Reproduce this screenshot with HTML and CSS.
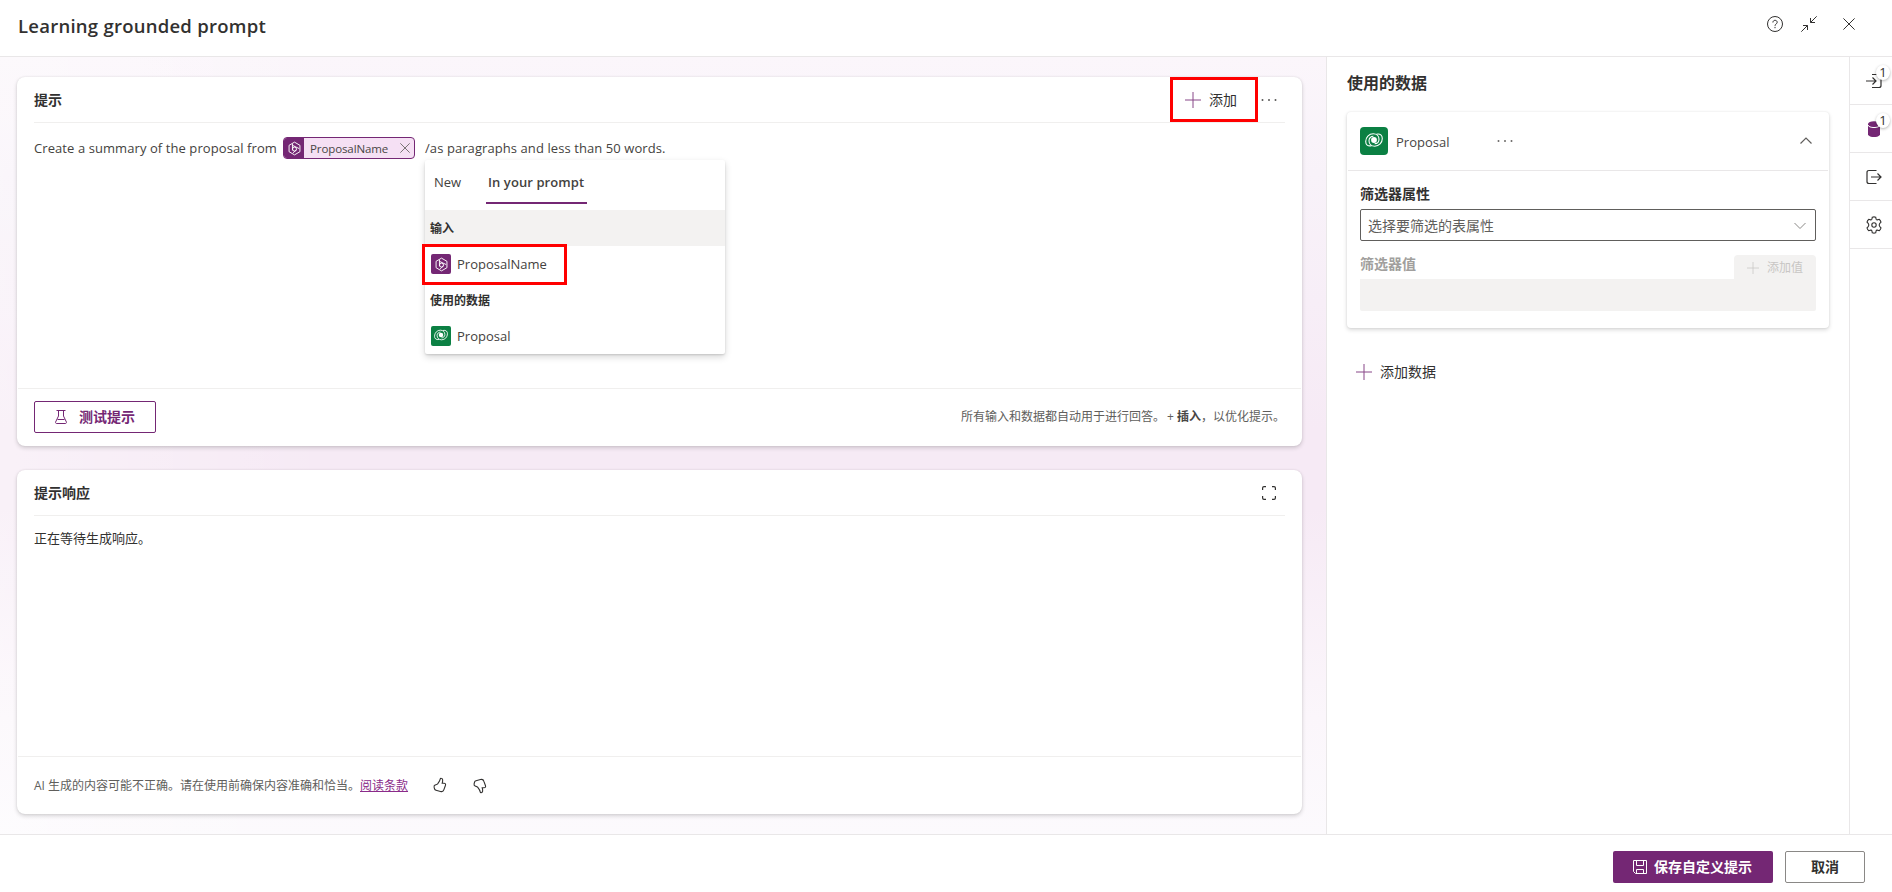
FILE: index.html
```html
<!DOCTYPE html>
<html lang="zh-CN">
<head>
<meta charset="utf-8">
<title>Learning grounded prompt</title>
<link rel="stylesheet" href="styles.css">
</head>
<body>
<svg class="defs" width="0" height="0">
  <symbol id="hex" viewBox="0 0 16 16"><path d="M8 1.200 13.800 4.600V11.400L8 14.800 2.200 11.400V4.600ZM5.800 3V10M5.800 4.600 13 8.100M10.300 9.300 6.500 12.600" fill="none" stroke="currentColor" stroke-width="1"/><circle cx="8" cy="8.600" r="2.100" fill="none" stroke="currentColor"/></symbol>
  <symbol id="dv" viewBox="0 0 18 14"><g fill="none" stroke="currentColor" stroke-width="1.100"><path d="M6.600 12.700C2.600 13.600.7 11.600.7 8.500.7 4.300 4 .8 8.200.8 11.800.8 14 3.300 14 6.300 14 9 12 10.700 9.600 10.700"/><path d="M11.400 1.200C15.400.300 17.300 2.400 17.300 5.500 17.300 9.700 14 13.200 9.800 13.200 6.200 13.200 4 10.700 4 7.700 4 5 6 3.300 8.400 3.300"/></g><circle cx="9" cy="7" r="2.900" fill="currentColor"/></symbol>
  <symbol id="plus" viewBox="0 0 16 16"><path d="M8 0V16M0 8H16" fill="none" stroke="currentColor"/></symbol>
  <symbol id="x" viewBox="0 0 12 12"><path d="M.4.4 11.600 11.600M11.600.4.4 11.600" fill="none" stroke="currentColor"/></symbol>
  <symbol id="dots" viewBox="0 0 16 4"><path d="M.7 1.200H2.300V2.800H.7ZM7.200 1.200H8.800V2.800H7.200ZM13.700 1.200H15.300V2.800H13.700Z" fill="currentColor"/></symbol>
  <symbol id="thumb" viewBox="0 0 14 16"><path d="M8.200 1.300C7.600 1.200 7.300 1.600 7.200 2.200 6.900 4 5.500 5.600 4.600 6.800 4 7.500 3 7.700 2.100 8.100 1.200 8.500.9 9.300 1.100 10.200L1.600 12C1.800 12.700 2.300 13.100 3 13.300L7.500 14.500C9 14.900 10.500 14.100 10.900 12.600L12.500 8.200C12.900 7 12.200 6.200 11 6.200H9.200C9.500 5 9.900 3.700 9.600 2.600 9.400 1.800 8.900 1.400 8.200 1.300Z" fill="none" stroke="currentColor" stroke-width="1.100"/></symbol>
</svg>

<header class="topbar">
  <h1 class="title">Learning grounded prompt</h1>
  <div class="window-actions">
    <svg class="help" viewBox="0 0 16 16" width="16" height="16" fill="none" stroke="#323130"><circle cx="8" cy="8" r="7.500"/><path d="M5.900 6.500C5.900 5.200 6.800 4.300 8 4.300S10.200 5.100 10.200 6.300C10.200 8 8 7.900 8 9.800M8 10.900V12.200"/></svg>
    <svg class="shrink" viewBox="0 0 16 16" width="16" height="16" fill="none" stroke="#323130"><path d="M.3 15.700 6.500 9.500M2 9.500H6.500V14M15.700.3 9.500 6.500M9.500 2V6.500H14"/></svg>
    <svg class="close" width="12" height="12"><use href="#x"/></svg>
  </div>
</header>

<main class="workspace">
  <section class="canvas">
    <article class="card prompt-card">
      <div class="card-head">
        <h2 class="heading">提示</h2>
        <div class="head-tools">
          <button class="add-button marked"><svg class="accent" width="16" height="16"><use href="#plus"/></svg><span>添加</span></button>
          <svg class="more" width="16" height="4"><use href="#dots"/></svg>
        </div>
      </div>
      <div class="prompt-text">
        <span class="copy copy-start">Create a summary of the proposal from</span>
        <span class="chip">
          <span class="chip-icon"><svg width="15" height="15"><use href="#hex"/></svg></span>
          <span class="chip-name">ProposalName</span>
          <svg class="chip-x" width="10" height="10"><use href="#x"/></svg>
        </span>
        <span class="anchor"><span class="copy copy-end">/as paragraphs and less than 50 words.</span>
          <div class="picker">
            <div class="tabs"><span class="tab tab-new">New</span><span class="tab tab-active"><span class="tab-label">In your prompt</span></span></div>
            <div class="group group-shaded">输入</div>
            <div class="option"><span class="tile violet"><svg width="15" height="15"><use href="#hex"/></svg></span><span class="option-name">ProposalName</span><span class="mark"></span></div>
            <div class="group">使用的数据</div>
            <div class="option"><span class="tile green"><svg width="14" height="12"><use href="#dv"/></svg></span><span class="option-name">Proposal</span></div>
          </div>
        </span>
      </div>
      <div class="card-foot prompt-foot">
        <button class="test-button"><svg viewBox="0 0 12 14" width="12" height="14" fill="none" stroke="currentColor"><path d="M1.500.5H10.500M3.500.5V6L.6 12C.4 12.800.7 13.500 1.500 13.500H10.500C11.300 13.500 11.600 12.800 11.400 12L8.500 6V.5M2.500 9.500H9.500"/></svg><span>测试提示</span></button>
        <p class="hint">所有输入和数据都自动用于进行回答。<span class="hint-plus">+</span><b>插入</b>，以优化提示。</p>
      </div>
    </article>

    <article class="card response-card">
      <div class="card-head">
        <h2 class="heading">提示响应</h2>
        <svg class="expand" viewBox="0 0 14 14" width="14" height="14" fill="none" stroke="#323130" stroke-width="1.200"><path d="M.6 4V2Q.6.6 2 .6H4M10 .6H12Q13.400.6 13.400 2V4M13.400 10V12Q13.400 13.400 12 13.400H10M4 13.400H2Q.6 13.400.6 12V10"/></svg>
      </div>
      <p class="waiting">正在等待生成响应。</p>
      <div class="card-foot disclaimer">
        <span class="ai">AI</span><span>生成的内容可能不正确。请在使用前确保内容准确和恰当。</span><a class="terms">阅读条款</a>
        <svg class="like" width="14" height="16"><use href="#thumb"/></svg>
        <svg class="dislike" width="14" height="16"><use href="#thumb"/></svg>
      </div>
    </article>
  </section>

  <aside class="data-pane">
    <h2 class="pane-title">使用的数据</h2>
    <div class="source">
      <div class="source-head">
        <span class="tile green big"><svg width="18" height="14"><use href="#dv"/></svg></span>
        <span class="source-name">Proposal</span>
        <svg class="source-more" width="16" height="4"><use href="#dots"/></svg>
        <svg class="chevron-up" viewBox="0 0 12 8" width="12" height="8"><path d="M.5 6.500 6 1 11.500 6.500" fill="none" stroke="#605e5c" stroke-width="1.200"/></svg>
      </div>
      <div class="source-body">
        <label class="label">筛选器属性</label>
        <div class="select"><span>选择要筛选的表属性</span><svg viewBox="0 0 12 8" width="12" height="8"><path d="M.5 1 6 6.500 11.500 1" fill="none" stroke="#8a8886"/></svg></div>
        <div class="value-row"><label class="label muted">筛选器值</label><span class="add-value"><svg width="12" height="12"><use href="#plus"/></svg><span>添加值</span></span></div>
        <div class="value-box"></div>
      </div>
    </div>
    <button class="add-data"><svg class="accent" width="16" height="16"><use href="#plus"/></svg><span>添加数据</span></button>
  </aside>

  <nav class="rail">
    <div class="rail-item"><svg viewBox="0 0 16 16" width="16" height="16" fill="none" stroke="#323130" stroke-width="1.200"><path d="M6 1.500H13Q15 1.500 15 3.500V12.500Q15 14.500 13 14.500H6M0 8H10M6.500 4.500 10 8 6.500 11.500"/></svg><span class="count">1</span></div>
    <div class="rail-item"><svg viewBox="0 0 16 16" width="16" height="16"><path d="M2 3V13.300C2 17 14 17 14 13.300V3Z" fill="#742774"/><ellipse cx="8" cy="3" rx="6" ry="2.800" fill="#742774"/><path d="M2 4C2.500 7.400 13.500 7.400 14 4" fill="none" stroke="#fff"/></svg><span class="count">1</span></div>
    <div class="rail-item"><svg viewBox="0 0 16 16" width="16" height="16" fill="none" stroke="#323130" stroke-width="1.200"><path d="M10.500 1.500H3Q1 1.500 1 3.500V12.500Q1 14.500 3 14.500H10.500M5 8H15M11.500 4.500 15 8 11.500 11.500"/></svg></div>
    <div class="rail-item"><svg viewBox="0 0 18 18" width="18" height="18" fill="none" stroke="#323130" stroke-width="1.100"><path d="M7.300 1.200Q9 .6 10.700 1.200L11.100 3.200Q11.300 4 12.200 3.900L14.300 3.300Q15.500 4.400 16 6.100L14.600 7.700Q13.700 9 14.600 10.300L16 11.900Q15.500 13.600 14.300 14.700L12.200 14.100Q11.300 14 11.100 14.800L10.700 16.800Q9 17.400 7.300 16.800L6.900 14.800Q6.700 14 5.800 14.100L3.700 14.700Q2.500 13.600 2 11.900L3.400 10.300Q4.300 9 3.400 7.700L2 6.100Q2.500 4.400 3.700 3.300L5.800 3.900Q6.700 4 6.900 3.200Z"/><circle cx="9" cy="9" r="2.200"/></svg></div>
  </nav>
</main>

<footer class="actions">
  <button class="save"><svg viewBox="0 0 14 14" width="14" height="14" fill="none" stroke="#fff"><path d="M.5.5H13.500V13.500H2.500L.5 11.500ZM3.500.5V5.500H10.500V.5M3.500 13.500V9.500H10.500V13.500"/></svg><span>保存自定义提示</span></button>
  <button class="cancel">取消</button>
</footer>
</body>
</html>
```
FILE: styles.css
```css
* { box-sizing: border-box; }
body {
  margin: 0;
  height: 892px;
  display: flex;
  flex-direction: column;
  overflow: hidden;
  background: #fff;
  color: #323130;
  font: 14px/20px "Open Sans", "Noto Sans CJK SC", sans-serif;
}
h1, h2, p { margin: 0; }
button { font: inherit; color: inherit; background: none; border: 0; padding: 0; display: flex; align-items: center; }
svg { display: block; flex: none; }
.defs { position: absolute; }
.accent { color: #742774; opacity: .85; }

.topbar { height: 57px; flex: none; border-bottom: 1px solid #e9e7e8; display: flex; justify-content: space-between; padding: 12px 37px 0 18px; }
.title { font-size: 18.500px; line-height: 28px; font-weight: 600; letter-spacing: .25px; }
.window-actions { display: flex; align-items: center; height: 24px; }
.shrink { margin: 0 26px 0 18px; }

.workspace { height: 777px; flex: none; display: flex; }
.canvas {
  width: 1327px;
  padding: 20px 24px 19px 17px;
  border-right: 1px solid #e9e7e8;
  background: linear-gradient(90deg, rgba(255,255,255,.35), rgba(255,255,255,0) 25%), linear-gradient(180deg, #fbf6fb 0, #f8f2f9 15%, #f6eaf5 48%, #f6eaf5 58%, #fbf6fb 85%, #fcfafd 100%);
  display: flex;
  flex-direction: column;
  gap: 24px;
}
.card { background: #fff; border-radius: 8px; box-shadow: 0 2px 4px rgba(0,0,0,.16), 0 0 2px rgba(0,0,0,.1); display: flex; flex-direction: column; }
.prompt-card { height: 369px; }
.response-card { height: 344px; }
.card-head { height: 46px; flex: none; margin: 0 17px; border-bottom: 1px solid #f0efee; display: flex; align-items: center; justify-content: space-between; }
.heading { font-size: 14px; line-height: 20px; font-weight: 600; }
.head-tools { display: flex; align-items: center; gap: 3px; margin-right: 8px; }
.add-button { width: 88px; height: 45px; gap: 8px; padding-left: 12px; position: relative; z-index: 1; }
.marked { border: 3px solid #f00; }
.expand { margin-right: 9px; }

.prompt-text { flex: 1; padding: 14px 17px; display: flex; align-items: flex-start; line-height: 22px; }
.copy { white-space: nowrap; color: #444240; font-size: 13px; }
.copy-start { width: 249px; letter-spacing: .08px; }
.copy-end { letter-spacing: .08px; }
.chip { width: 132px; height: 22px; margin-right: 10px; border: 1px solid #742774; border-radius: 4px; background: #f5e0f4; display: flex; align-items: center; overflow: hidden; }
.chip-icon { flex: none; width: 20px; height: 20px; background: #742774; color: #fff; display: flex; align-items: center; justify-content: center; }
.chip-name { flex: none; width: 96px; padding-left: 6px; font-size: 11.500px; letter-spacing: -.1px; line-height: 21px; color: #484644; }
.chip-x { color: #605e5c; }
.anchor { position: relative; }

.picker { position: absolute; left: 0; top: 23px; z-index: 2; width: 300px; height: 194px; background: #fff; border-radius: 2px; box-shadow: 0 3px 7px rgba(0,0,0,.16), 0 1px 2px rgba(0,0,0,.12); font-size: 13px; color: #444240; }
.tabs { height: 50px; padding-left: 9px; display: flex; }
.tab { height: 44px; line-height: 45px; }
.tab-new { width: 52px; }
.tab-active { width: 101px; padding-left: 2px; font-weight: 600; border-bottom: 2px solid #742774; white-space: nowrap; letter-spacing: .08px; }
.group { height: 36px; padding-left: 5px; font-size: 12px; line-height: 37px; font-weight: 600; color: #323130; }
.group-shaded { background: #f3f2f1; }
.option { height: 36px; padding-left: 6px; display: flex; align-items: center; gap: 6px; position: relative; }
.mark { position: absolute; left: -3px; top: -2px; width: 145px; height: 41px; border: 3px solid #f00; }
.tile { width: 20px; height: 20px; border-radius: 2px; color: #fff; display: flex; align-items: center; justify-content: center; }
.violet { background: #742774; }
.green { background: #0b8043; padding-bottom: 2px; }
.big { width: 28px; height: 28px; border-radius: 4px; padding-bottom: 3px; }

.card-foot { height: 58px; margin: 0 1px; padding: 0 16px; border-top: 1px solid #f0efee; display: flex; align-items: center; justify-content: space-between; }
.prompt-foot { padding-bottom: 1px; }
.test-button { width: 122px; height: 32px; border: 1px solid #742774; border-radius: 2px; color: #742774; font-weight: 600; gap: 12px; padding-left: 20px; }
.hint { font-size: 12px; color: #605e5c; white-space: nowrap; }
.hint b { font-weight: 600; color: #484644; }
.hint-plus { display: inline-block; width: 12px; padding-left: 2px; }
.waiting { flex: 1; padding: 12px 17px; font-size: 13px; }
.disclaimer { justify-content: flex-start; font-size: 12px; color: #605e5c; }
.ai { width: 14px; }
.terms { color: #8a2b8a; text-decoration: underline; }
.like { margin-left: 25px; margin-top: -1px; color: #323130; }
.dislike { margin-left: 26px; transform: scaleY(-1); color: #323130; }

.data-pane { width: 522px; padding: 15px 20px; }
.pane-title { font-size: 16px; line-height: 22px; font-weight: 600; }
.source { height: 216px; margin-top: 18px; border-radius: 4px; box-shadow: 0 2px 4px rgba(0,0,0,.15), 0 0 2px rgba(0,0,0,.1); }
.source-head { height: 59px; margin: 0 1px; padding: 0 16px 0 12px; border-bottom: 1px solid #e9e7e8; display: flex; align-items: center; }
.source-name { flex: none; width: 109px; padding: 1px 0 0 8px; font-size: 13px; color: #484644; }
.source-more { color: #484644; }
.chevron-up { margin-left: auto; }
.source-body { padding: 13px 13px 0; display: flex; flex-direction: column; }
.label { font-weight: 600; }
.muted { color: #a19f9d; }
.select { height: 32px; margin-top: 5px; border: 1px solid #605e5c; border-radius: 2px; padding: 1px 9px 0 7px; display: flex; align-items: center; justify-content: space-between; color: #605e5c; }
.value-row { height: 24px; margin-top: 14px; display: flex; justify-content: space-between; }
.value-row .label { line-height: 18px; }
.add-value { width: 82px; height: 24px; border-radius: 4px 4px 0 0; background: #f3f2f1; color: #c8c6c4; font-size: 12px; display: flex; align-items: center; gap: 8px; padding: 1px 0 0 13px; }
.value-box { height: 32px; background: #f3f2f1; border-radius: 0 0 2px 2px; }
.add-data { margin: 34px 0 0 9px; gap: 8px; }

.rail { width: 43px; border-left: 1px solid #e9e7e8; }
.rail-item { height: 48px; border-bottom: 1px solid #e9e7e8; padding-left: 6px; display: flex; align-items: center; justify-content: center; position: relative; }
.count { position: absolute; left: 26px; top: 8px; width: 14px; height: 15px; border-radius: 50%; background: #fff; box-shadow: 0 1px 3px rgba(0,0,0,.3); font-size: 13px; line-height: 15px; text-align: center; }

.actions { height: 58px; border-top: 1px solid #e9e7e8; padding: 16px 27px 0 0; display: flex; justify-content: flex-end; gap: 12px; font-weight: 600; }
.save { width: 160px; height: 32px; background: #742774; color: #fff; border-radius: 2px; gap: 7px; padding-left: 20px; }
.cancel { width: 80px; height: 32px; border: 1px solid #8a8886; border-radius: 2px; justify-content: center; }
```
